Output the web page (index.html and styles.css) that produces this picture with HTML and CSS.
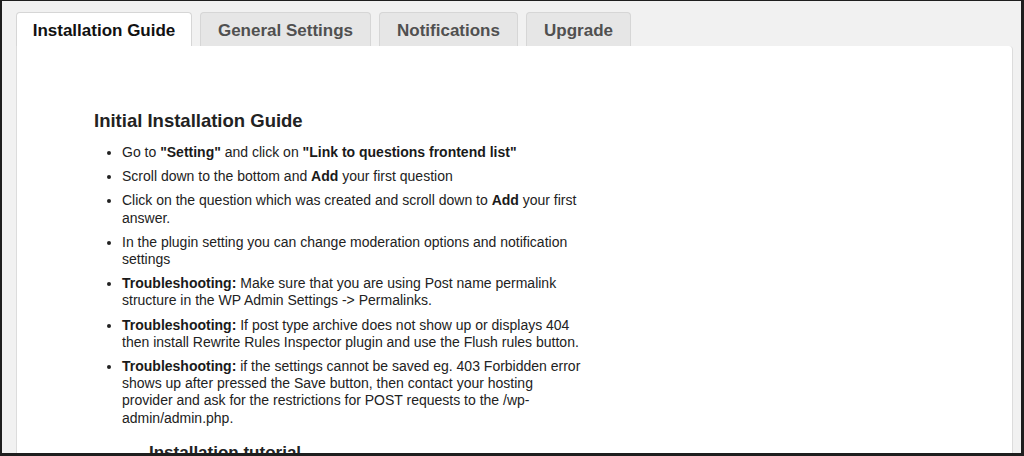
FILE: index.html
```html
<!DOCTYPE html>
<html>
<head>
<meta charset="utf-8">
<link rel="stylesheet" href="styles.css">
</head>
<body>
<div class="frame">
  <div class="wrap">
    <nav class="tabs">
      <a class="tab active">Installation Guide</a>
      <a class="tab">General Settings</a>
      <a class="tab">Notifications</a>
      <a class="tab">Upgrade</a>
    </nav>
    <div class="panel">
      <div class="content">
        <h2 class="title">Initial Installation Guide</h2>
        <ul class="steps">
          <li>Go to <b>"Setting"</b> and click on <b>"Link to questions frontend list"</b></li>
          <li>Scroll down to the bottom and <b>Add</b> your first question</li>
          <li>Click on the question which was created and scroll down to <b>Add</b> your first<br>answer.</li>
          <li>In the plugin setting you can change moderation options and notification<br>settings</li>
          <li><b>Troubleshooting:</b> Make sure that you are using Post name permalink<br>structure in the WP Admin Settings -&gt; Permalinks.</li>
          <li><b>Troubleshooting:</b> If post type archive does not show up or displays 404<br>then install Rewrite Rules Inspector plugin and use the Flush rules button.</li>
          <li><b>Troubleshooting:</b> if the settings cannot be saved eg. 403 Forbidden error<br>shows up after pressed the Save button, then contact your hosting<br>provider and ask for the restrictions for POST requests to the /wp-<br>admin/admin.php.</li>
        </ul>
        <h3 class="sub">Installation tutorial</h3>
      </div>
    </div>
  </div>
</div>
</body>
</html>
```
FILE: styles.css
```css
html, body {
  margin: 0;
  padding: 0;
  height: 456px;
  overflow: hidden;
}
body {
  font-family: "Liberation Sans", Arial, sans-serif;
  color: #222;
  background: #1e1e1e;
}
.frame {
  box-sizing: border-box;
  height: 456px;
  border-top: 1px solid #1e1e1e;
  border-left: 2px solid #1e1e1e;
  border-right: 3px solid #1e1e1e;
  border-bottom: 3px solid #1e1e1e;
  background: #f1f1f1;
  overflow: hidden;
}
.wrap {
  padding: 11px 8px 0 14px;
}
.tabs {
  display: flex;
  gap: 8px;
  height: 34px;
  align-items: flex-end;
}
.tab {
  box-sizing: border-box;
  height: 34px;
  display: flex;
  align-items: center;
  justify-content: center;
  padding-top: 2px;
  white-space: nowrap;
  border: 1px solid #d6d6d6;
  border-bottom: none;
  border-radius: 4px 4px 0 0;
  background: #e6e6e6;
  color: #505050;
  font-weight: bold;
  font-size: 17px;
}
.tab.active {
  background: #fff;
  color: #111;
}
.tab:nth-child(1) { width: 176px; }
.tab:nth-child(2) { width: 171px; }
.tab:nth-child(3) { width: 139px; }
.tab:nth-child(4) { width: 105px; }
.panel {
  background: #fff;
  border: 1px solid #dcdcdc;
  border-top: none;
  border-radius: 0 4px 0 0;
  height: 420px;
}
.content {
  padding: 63px 0 0 77px;
  width: 540px;
}
.title {
  margin: 0 0 11px;
  font-size: 18.5px;
  font-weight: bold;
  color: #222;
  line-height: 24px;
}
.steps {
  margin: 0;
  padding-left: 28px;
  font-size: 14px;
  line-height: 17.2px;
  color: #222;
  white-space: nowrap;
}
.steps li {
  margin-bottom: 7px;
}
.steps b {
  color: #1a1a1a;
}
.sub {
  margin: 16px 0 0 55px;
  font-size: 17px;
  font-weight: bold;
  line-height: 20px;
  color: #222;
}
```
